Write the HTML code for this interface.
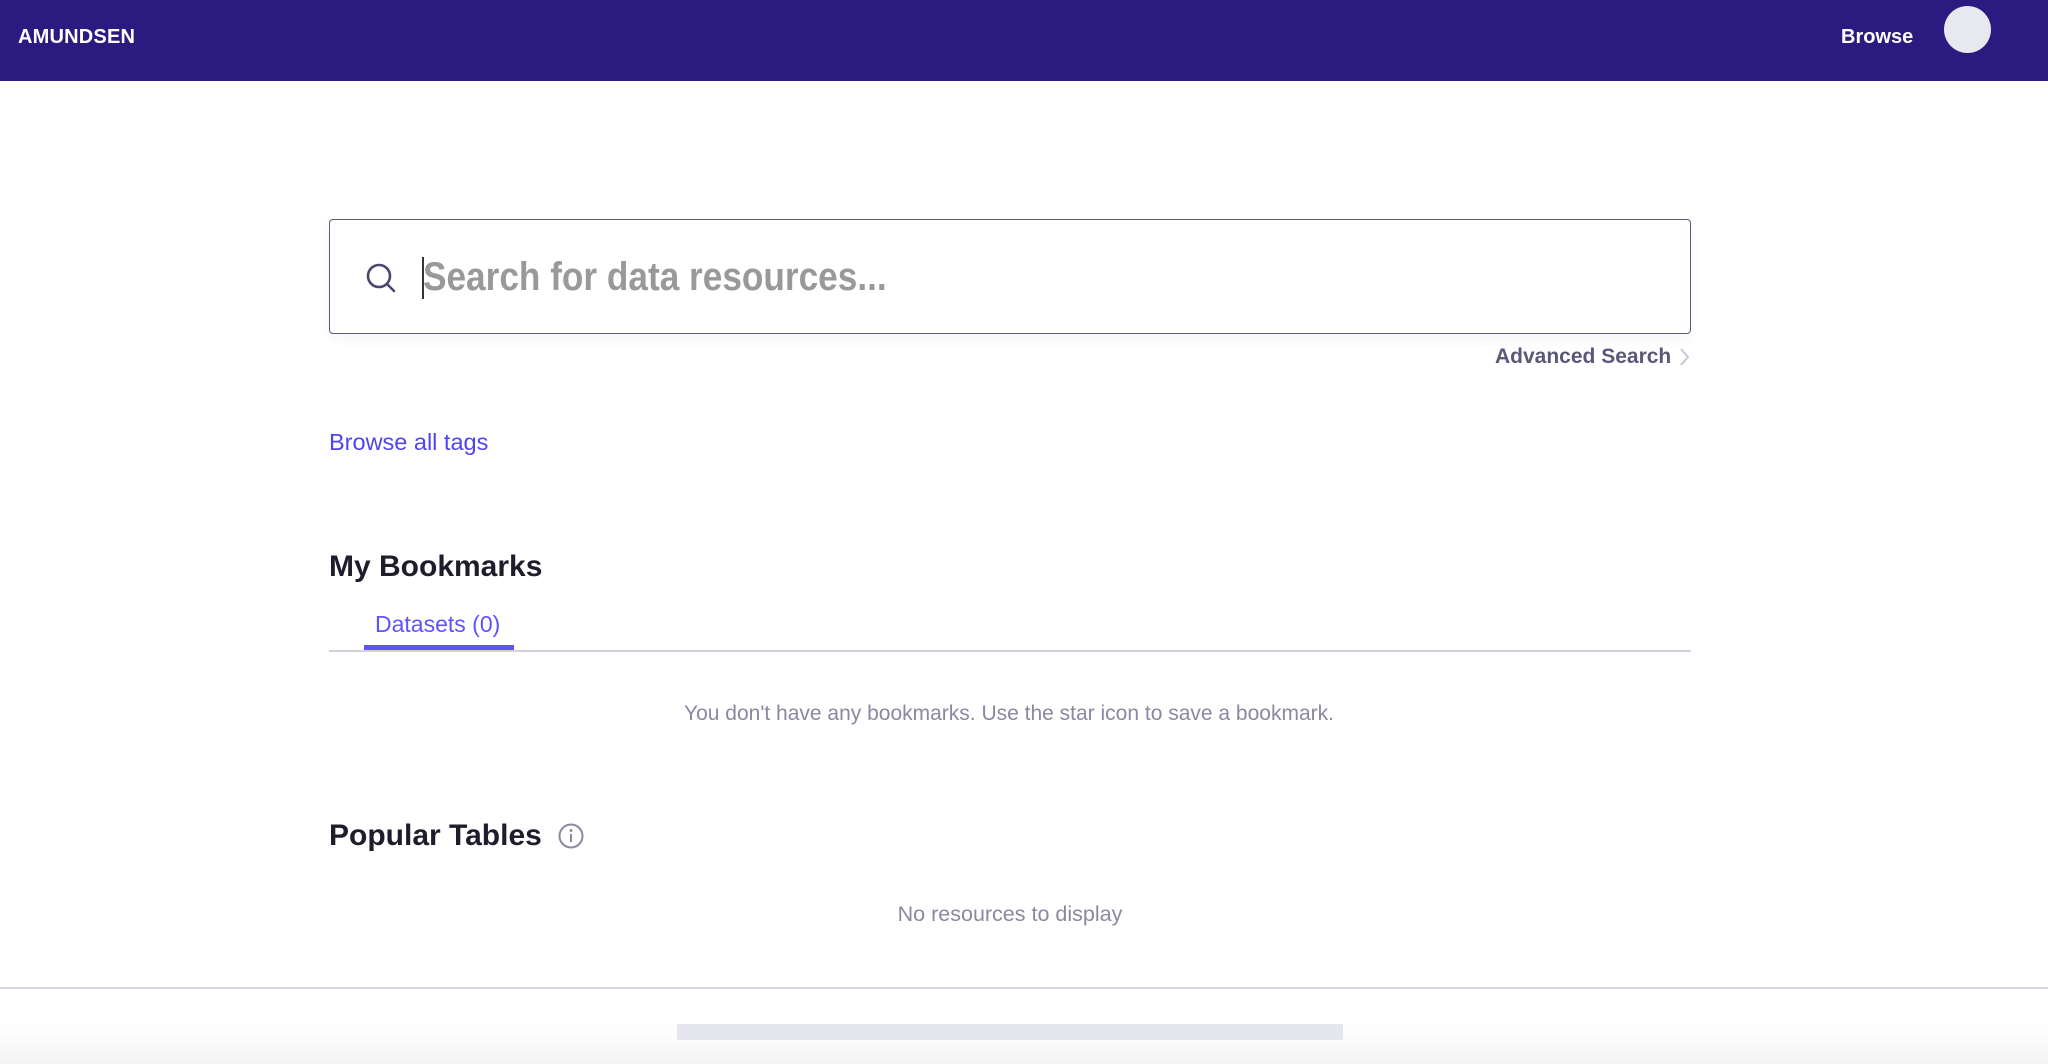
<!DOCTYPE html>
<html><head><meta charset="utf-8"><style>
*{margin:0;padding:0;box-sizing:border-box}
body{width:2048px;height:1064px;background:#fff;font-family:"Liberation Sans",sans-serif;position:relative;overflow:hidden}
.nav{position:absolute;left:0;top:0;width:2048px;height:81px;background:#2b1b81}
.abs{position:absolute;white-space:nowrap}
</style></head><body>
<div class="nav"></div>
<div class="abs" style="left:18px;top:26px;color:#fff;font-weight:bold;font-size:20px;letter-spacing:0.2px">AMUNDSEN</div>
<div class="abs" style="left:1841px;top:26px;color:#fff;font-weight:bold;font-size:20px">Browse</div>
<div class="abs" style="left:1944px;top:6px;width:47px;height:47px;border-radius:50%;background:#e8e8ef"></div>

<div class="abs" style="left:329px;top:219px;width:1362px;height:115px;border:1.5px solid #5c5a78;border-radius:4px;box-shadow:0 6px 14px rgba(0,0,0,0.04)"></div>
<svg class="abs" style="left:364px;top:261px" width="34" height="34" viewBox="0 0 34 34"><circle cx="15" cy="15" r="11" fill="none" stroke="#4a4870" stroke-width="2.6"/><line x1="23" y1="23" x2="30" y2="30" stroke="#4a4870" stroke-width="2.6" stroke-linecap="round"/></svg>
<div class="abs" style="left:422px;top:257px;width:2px;height:42px;background:#333"></div>
<div class="abs" style="left:423px;top:255px;color:#999;font-weight:bold;font-size:40px;transform:scaleX(0.88);transform-origin:left center">Search for data resources...</div>

<div class="abs" style="left:1495px;top:345px;color:#5a5878;font-weight:bold;font-size:21px">Advanced Search</div>
<svg class="abs" style="left:1678px;top:347px" width="14" height="20" viewBox="0 0 14 20"><path d="M3 2 L10 10 L3 18" fill="none" stroke="#c8c8d4" stroke-width="2"/></svg>

<div class="abs" style="left:329px;top:429px;color:#4f44f5;font-size:23.5px">Browse all tags</div>

<div class="abs" style="left:329px;top:550px;color:#1e1d2b;font-weight:bold;font-size:30px">My Bookmarks</div>
<div class="abs" style="left:375px;top:611px;color:#5f52ff;font-size:23px">Datasets (0)</div>
<div class="abs" style="left:329px;top:650px;width:1362px;height:2px;background:#d2d2dc"></div>
<div class="abs" style="left:364px;top:645px;width:150px;height:5px;background:#5f52ff"></div>
<div class="abs" style="left:0;width:2018px;top:702px;text-align:center;color:#8a89a0;font-size:21px">You don't have any bookmarks. Use the star icon to save a bookmark.</div>

<div class="abs" style="left:329px;top:819px;color:#1e1d2b;font-weight:bold;font-size:30px">Popular Tables</div>
<svg class="abs" style="left:557px;top:822px" width="28" height="28" viewBox="0 0 28 28"><circle cx="14" cy="14" r="11.5" fill="none" stroke="#8a89a0" stroke-width="2"/><circle cx="14" cy="8.5" r="1.5" fill="#8a89a0"/><line x1="14" y1="12" x2="14" y2="20" stroke="#8a89a0" stroke-width="2"/></svg>
<div class="abs" style="left:0;width:2020px;top:902px;text-align:center;color:#8a89a0;font-size:21.5px">No resources to display</div>

<div class="abs" style="left:0;top:987px;width:2048px;height:2px;background:#d6d6e0"></div>
<div class="abs" style="left:0;top:989px;width:2048px;height:75px;background:linear-gradient(#fff,#fdfdfd 60%,#f3f3f3)"></div>
<div class="abs" style="left:677px;top:1024px;width:666px;height:16px;background:#e6e6ee"></div>
</body></html>
